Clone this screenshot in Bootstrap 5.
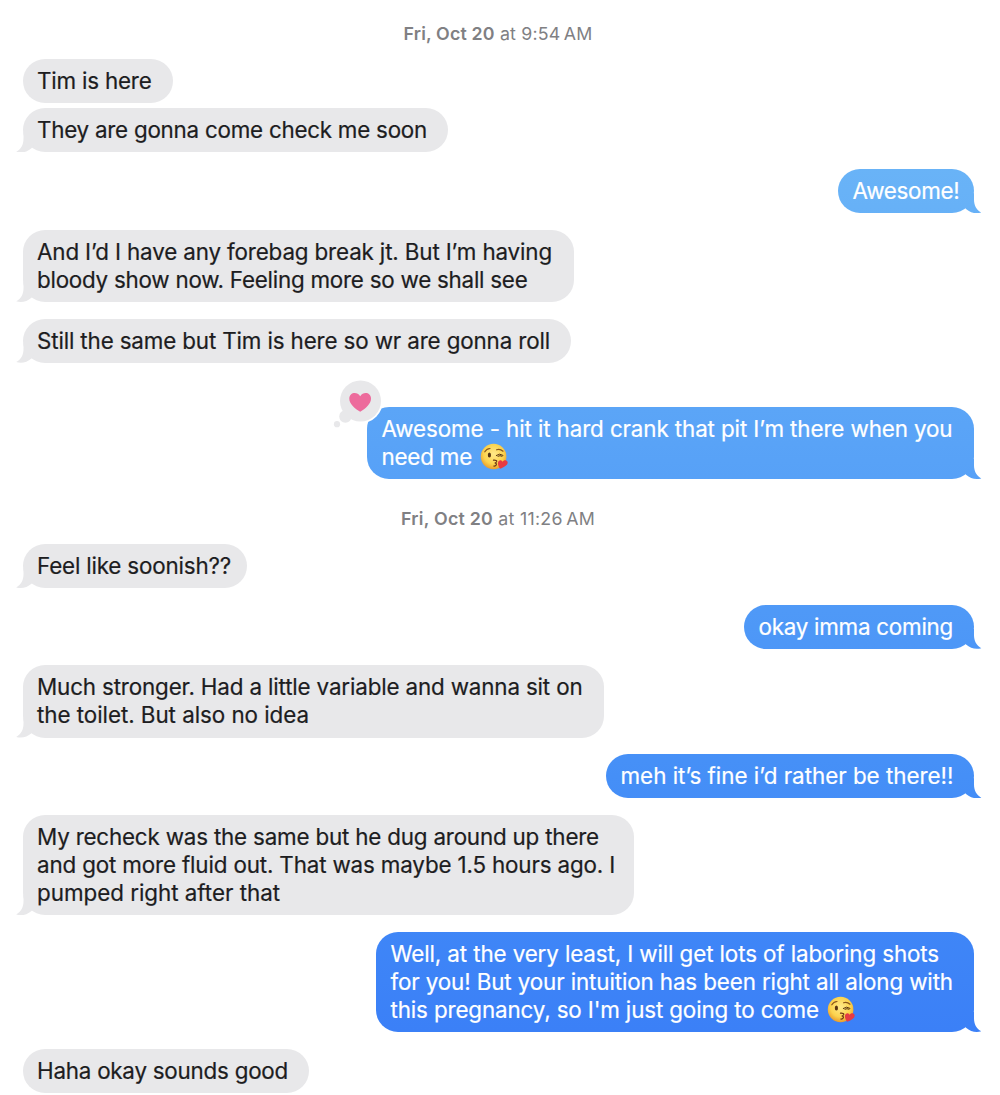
<!DOCTYPE html>
<html lang="en">
<head>
    <meta charset="UTF-8">
    <meta name="viewport" content="width=device-width, initial-scale=1.0">
    <title>Messages</title>
    <link href="https://cdn.jsdelivr.net/npm/bootstrap@5.3.3/dist/css/bootstrap.min.css" rel="stylesheet">
    <style>
        body {
            font-family: Inter, "Liberation Sans", sans-serif;
            font-size: 22.4px;
            line-height: 28.05px;
            color: #1d1d1f;
            overflow: hidden;
        }

        .chat {
            width: 1000px;
            height: 1095px;
            padding: 19.6px 26px 0 23px;
            gap: 16.7px;
            overflow: hidden;
        }

        .stamp {
            font-size: 17.8px;
            color: #808083;
            padding-right: 1px;
        }

        .stamp-first { margin-bottom: -5.4px; }
        .stamp-next { margin: 9px 0 -5.5px; }

        .bubble {
            position: relative;
            padding: 8px 14px;
            border-radius: 22px;
        }

        .line {
            white-space: nowrap;
        }

        .bubble .line {
            -webkit-text-stroke: .2px currentColor;
        }

        .msg-in {
            background: #e8e8ea;
        }

        .msg-out {
            color: #fff;
            padding-left: 14.5px;
        }

        /* one gradient runs down the whole window behind the sent messages */
        .msg-out, .msg-out.tail::after {
            background: linear-gradient(#70bbf7 0, #68b2f7 190px, #59a3f7 443px, #4e98f7 627px, #458ff7 777px, #3b80f7 1030px) fixed;
        }

        .tail::after {
            content: "";
            position: absolute;
            right: -7.5px;
            bottom: 0;
            width: 24px;
            height: 20px;
            clip-path: path("M16.5 0V6C16.5 12 18.8 16.8 23.8 19.4C18.5 20.8 13 19.8 8.5 15.8L2 8L10 0Z");
        }

        .msg-in.tail::after {
            background: #e8e8ea;
            right: auto;
            left: -7.5px;
            transform: scaleX(-1);
        }

        .group-next { margin-top: -11.3px; }
        .has-reaction { margin-top: 27.6px; }

        .reaction {
            position: absolute;
            left: -37px;
            top: -30px;
        }

        .emoji {
            width: 28px;
            height: 28px;
            margin-left: 8px;
        }
    </style>
</head>
<body class="bg-white">
    <svg class="position-absolute" width="0" height="0">
        <defs>
            <radialGradient id="face" cx=".5" cy=".4" r=".6">
                <stop offset="0" stop-color="#ffe98a"/>
                <stop offset=".65" stop-color="#fcd34e"/>
                <stop offset="1" stop-color="#e89b2c"/>
            </radialGradient>
        </defs>
        <symbol id="kiss" viewBox="0 0 28 28">
            <circle cx="13.6" cy="13.5" r="12.8" fill="url(#face)"/>
            <path d="M4.8 8.8Q6.4 5.8 10 5.5M16.6 6.8Q20 5.6 23 8.2" fill="none" stroke="#8a561c" stroke-width="1.2" stroke-linecap="round"/>
            <ellipse cx="9.4" cy="12" rx="1.6" ry="2.5" fill="#5a3512"/>
            <path d="M16.3 12.4Q19.5 9.8 23 12.3M18 13.2Q20 12 22 13.2" fill="none" stroke="#5a3512" stroke-width="1" stroke-linecap="round"/>
            <path d="M13.5 17.2Q17.4 17 16.6 18.7Q16 19.8 14.7 20Q17 20.4 16.2 22Q15.6 23.2 13.8 23" fill="none" stroke="#6b3515" stroke-width="1.2" stroke-linecap="round"/>
            <path d="M20 25.8C18 22.7 17.2 20 18.5 18.2C20 16.4 22 17.2 22.4 18.7C23.6 16.8 26.3 16.6 27.4 18.4C28.8 21.4 24.7 24.4 20 25.8Z" fill="#e53b44"/>
        </symbol>
    </svg>

    <main class="chat d-flex flex-column align-items-start">
        <div class="stamp stamp-first align-self-center"><span class="line d-inline-block" data-w="189"><span class="fw-semibold">Fri, Oct 20</span> at 9:54&#8201;AM</span></div>

        <div class="bubble msg-in" data-w="150">
            <span class="line d-block" data-w="114.5">Tim is here</span>
        </div>
        <div class="bubble msg-in tail group-next" data-w="425">
            <span class="line d-block" data-w="390">They are gonna come check me soon</span>
        </div>
        <div class="bubble msg-out tail align-self-end" data-w="136">
            <span class="line d-block" data-w="107">Awesome!</span>
        </div>
        <div class="bubble msg-in tail" data-w="551">
            <span class="line d-block" data-w="515">And I’d I have any forebag break jt. But I’m having</span>
            <span class="line d-block" data-w="490.5">bloody show now. Feeling more so we shall see</span>
        </div>
        <div class="bubble msg-in tail" data-w="548">
            <span class="line d-block" data-w="513">Still the same but Tim is here so wr are gonna roll</span>
        </div>
        <div class="bubble msg-out tail align-self-end has-reaction" data-w="607">
            <span class="line d-block" data-w="571">Awesome - hit it hard crank that pit I’m there when you</span>
            <span class="d-flex"><span class="line" data-w="90.5">need me</span><svg class="emoji"><use href="#kiss"/></svg></span>
            <svg class="reaction" width="56" height="56" viewBox="330 377 56 56">
                <circle cx="360.5" cy="401" r="22.3" fill="#fff"/>
                <g fill="#e8e8ea">
                    <circle cx="360.5" cy="401" r="20.5"/>
                    <circle cx="345.4" cy="416.5" r="6.2"/>
                    <circle cx="337" cy="424.2" r="3.1"/>
                </g>
                <path d="M360.2 411.8C355 408.5 349.3 404 349.3 398.7C349.3 392.5 357 391 360.2 396.3C363.4 391 371 392.5 371 398.7C371 404 365.4 408.5 360.2 411.8Z" fill="#ed6b9c"/>
            </svg>
        </div>

        <div class="stamp stamp-next align-self-center"><span class="line d-inline-block" data-w="194"><span class="fw-semibold">Fri, Oct 20</span> at 11:26&#8201;AM</span></div>

        <div class="bubble msg-in tail" data-w="224">
            <span class="line d-block" data-w="194">Feel like soonish??</span>
        </div>
        <div class="bubble msg-out tail align-self-end" data-w="230">
            <span class="line d-block" data-w="194.5">okay imma coming</span>
        </div>
        <div class="bubble msg-in tail" data-w="581">
            <span class="line d-block" data-w="545.5">Much stronger. Had a little variable and wanna sit on</span>
            <span class="line d-block" data-w="272">the toilet. But also no idea</span>
        </div>
        <div class="bubble msg-out tail align-self-end" data-w="368">
            <span class="line d-block" data-w="333">meh it’s fine i’d rather be there!!</span>
        </div>
        <div class="bubble msg-in tail" data-w="611">
            <span class="line d-block" data-w="562">My recheck was the same but he dug around up there</span>
            <span class="line d-block" data-w="578">and got more fluid out. That was maybe 1.5 hours ago. I</span>
            <span class="line d-block" data-w="243">pumped right after that</span>
        </div>
        <div class="bubble msg-out tail align-self-end" data-w="598">
            <span class="line d-block" data-w="548.5">Well, at the very least, I will get lots of laboring shots</span>
            <span class="line d-block" data-w="562.5">for you! But your intuition has been right all along with</span>
            <span class="d-flex"><span class="line" data-w="428.5">this pregnancy, so I'm just going to come</span><svg class="emoji"><use href="#kiss"/></svg></span>
        </div>
        <div class="bubble msg-in" data-w="286">
            <span class="line d-block" data-w="251">Haha okay sounds good</span>
        </div>
    </main>

    <script>
        // Bubble widths
        document.querySelectorAll(".bubble").forEach((bubble) => {
            bubble.style.width = bubble.dataset.w + "px";
        });

        // Track each line so that it fills its own width
        document.querySelectorAll(".line").forEach((line) => {
            const range = document.createRange();
            range.selectNodeContents(line);
            const natural = range.getBoundingClientRect().width;
            const spacing = (line.dataset.w - natural) / line.textContent.length;
            line.style.letterSpacing = spacing.toFixed(3) + "px";
        });
    </script>

    <script src="https://cdn.jsdelivr.net/npm/bootstrap@5.3.3/dist/js/bootstrap.bundle.min.js"></script>
</body>
</html>
